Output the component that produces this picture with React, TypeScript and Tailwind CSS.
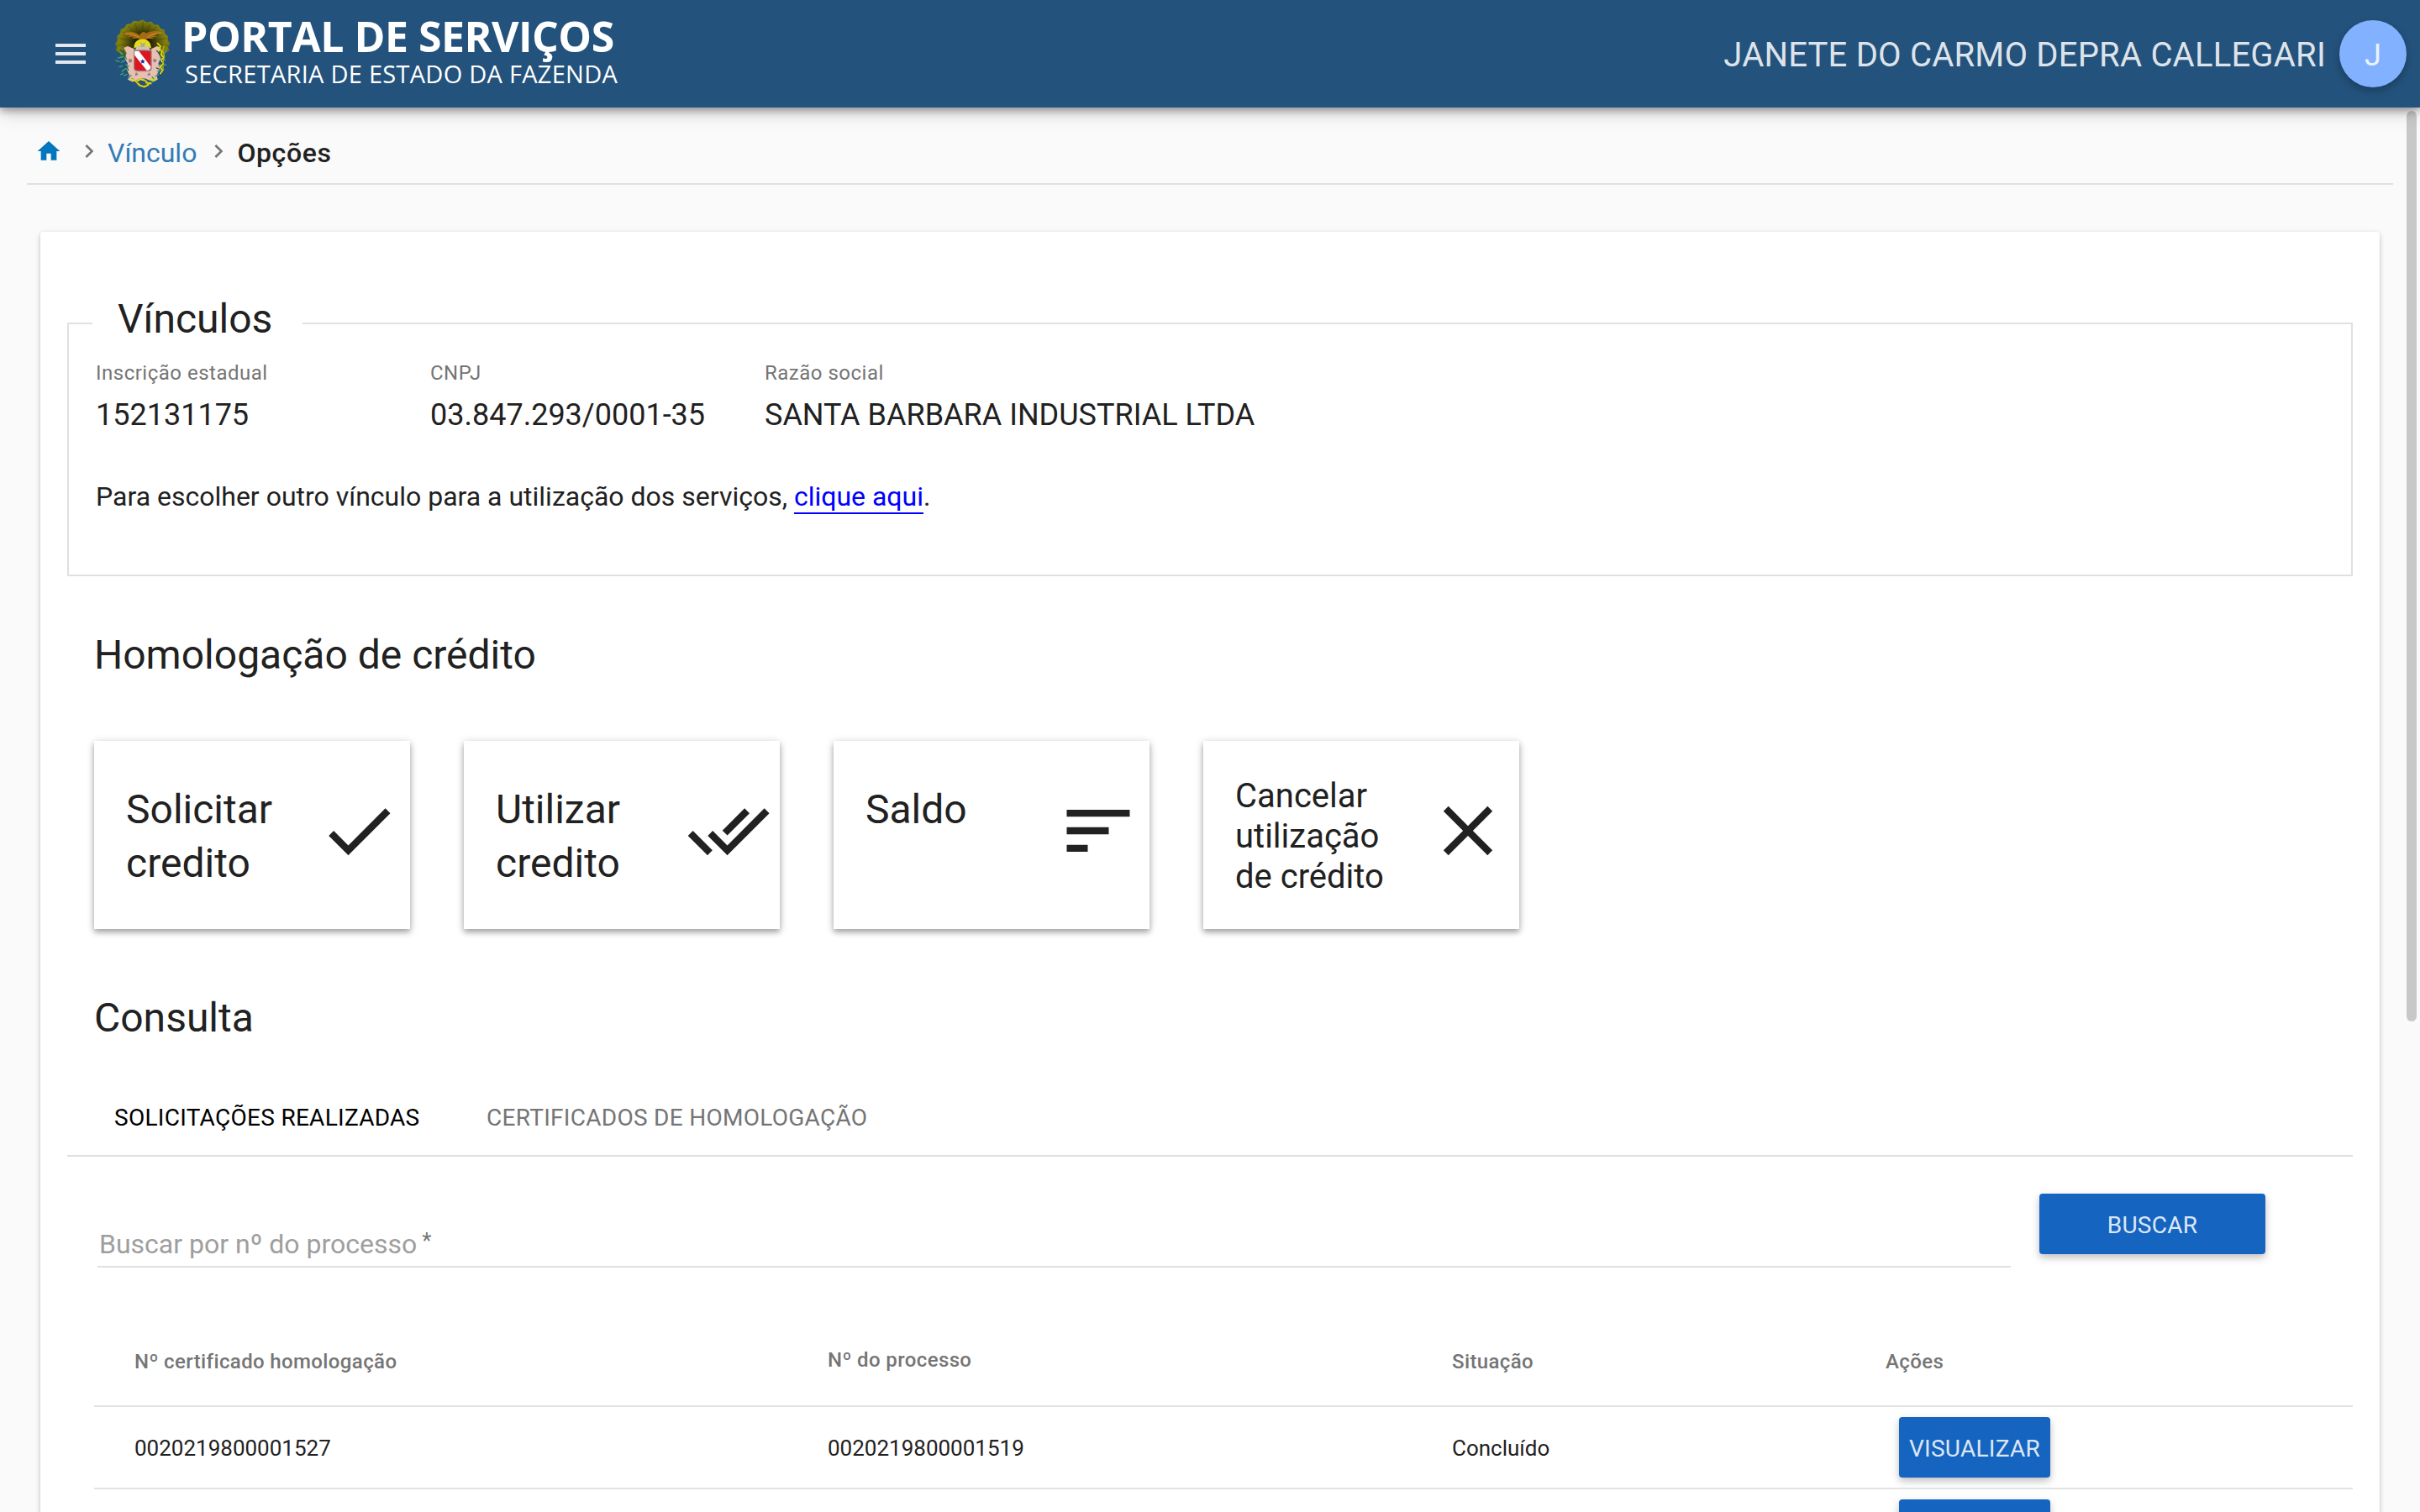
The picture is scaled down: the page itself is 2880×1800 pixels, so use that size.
import React from 'react';

const DARK = '#212121';

function Glyph({ d, className = '', fill = DARK }: { d: string; className?: string; fill?: string }) {
  return (
    <svg viewBox="0 0 24 24" className={`block shrink-0 ${className}`} fill={fill} aria-hidden="true">
      <path d={d} />
    </svg>
  );
}

const ICONS = {
  menu: 'M3 18h18v-2H3v2zm0-5h18v-2H3v2zm0-7v2h18V6H3z',
  home: 'M10 20v-6h4v6h5v-8h3L12 3 2 12h3v8z',
  chevron: 'M10 6L8.59 7.41 13.17 12l-4.58 4.59L10 18l6-6z',
  check: 'M9 16.17L4.83 12l-1.42 1.41L9 19 21 7l-1.41-1.41z',
  doneAll:
    'M18 7l-1.41-1.41-6.34 6.34 1.41 1.41L18 7zm4.24-1.41L11.66 16.17 7.48 12l-1.41 1.41L11.66 19l12-12-1.42-1.41zM.41 13.41L6 19l1.41-1.41L1.83 12 .41 13.41z',
  sort: 'M3 18h6v-2H3v2zM3 6v2h18V6H3zm0 7h12v-2H3v2z',
  close:
    'M19 6.41L17.59 5 12 10.59 6.41 5 5 6.41 10.59 12 5 17.59 6.41 19 12 13.41 17.59 19 19 17.59 13.41 12z',
};

/* State coat of arms */
function Crest() {
  return (
    <svg viewBox="45 35 205 255" className="mt-[22px] block h-[85px] w-[68px] shrink-0" aria-hidden="true">
      <defs>
        <radialGradient id="fan" cx="150" cy="125" r="105" gradientUnits="userSpaceOnUse">
          <stop offset="0.25" stopColor="#1d1c05" />
          <stop offset="0.55" stopColor="#5a580a" />
          <stop offset="0.8" stopColor="#85820f" />
          <stop offset="1" stopColor="#6c6b18" />
        </radialGradient>
      </defs>
      <path
        d="M150 39l14 9 17-2 10 10 16 2 6 12 15 5 1 13 12 10-1 14 8 13-7 12 4 13-14 8-8 16H72l-4-16-15-8 4-13-6-12 8-13-1-16 11-9 2-14 15-6 6-12 16-2 9-10 18 2z"
        fill="url(#fan)"
      />
      <path
        d="M150 120V44M150 120L122 52M150 120L98 62M150 120L78 82M150 120L66 106M150 120L58 132M150 120L178 52M150 120L202 62M150 120L222 82M150 120L234 106M150 120L242 132"
        stroke="#3a3908"
        strokeWidth="2"
        opacity="0.7"
      />
      <path
        d="M78 88c20-10 42-8 60 6l8-8c6-6 14-4 16 2 12-8 36-12 62-4-16 3-26 6-32 12l10 4-18 2 6 5-24 0-8 8-12 2-10-11-26 0 8-6-22 0 8-6-14-1z"
        fill="#a56a14"
      />
      <path d="M90 90c18-3 34 4 48 14M218 86c-20 0-38 6-52 17" stroke="#d39a2c" strokeWidth="3" fill="none" />
      <path d="M119 142c-2-22 11-34 30-34s32 12 31 34l-12-6h-38z" fill="#e6dc12" />
      <path d="M130 130c8 8 30 8 40 0l8 20h-56z" fill="#d2c0b2" />
      <path d="M141 118l9 7 10-7-4 16h-12z" fill="#aaa8a4" />
      <path
        d="M82 140l14-6 24 10v70h60v-70l22-10 14 6-8 14 6 24-8 18 6 20-12 22 4 16-18 8-26-12h-20l-26 12-18-8 6-16-10-22 4-20-10-18 6-20z"
        fill="#e8bfb0"
      />
      <path d="M100 178l12 4-2 10-10 0zM188 178l12 4-4 10-8-2zM126 226l8 10-12 4zM172 228l8 8-14 4z" fill="#8b7f7c" />
      <g fill="none" stroke="#3f9c80" strokeWidth="4.5" strokeLinecap="round">
        <path d="M68 154l14 8M62 176l16-4M54 186l14 4M72 192l16-8M66 208l14-4M76 224l14-10M84 240l14-8M98 250l10-12M86 168l6 12M112 250l8 6M90 200l10 6M70 236l10-4" />
        <path d="M226 160l8-8M216 178l14 6M208 200l12 8M204 224l12-6M196 242l10-6M190 252l-6-8M222 198l12 4M176 256l10 6" />
      </g>
      <g fill="none" stroke="#1e5944" strokeWidth="4" strokeLinecap="round">
        <path d="M70 148l18 16M66 164l14 4M80 150l6 22M60 196l12-6M78 202l8 8M90 226l8 8M94 208l4 12M200 150l12 12M206 156l8 14M220 214l6 8M200 212l8 4M210 234l6 4" />
      </g>
      <path
        d="M202 122l12 12-6 10 12 8-4 12 10 10-10 10 8 12-12 12 10 12-10 14"
        fill="none"
        stroke="#e8de0c"
        strokeWidth="5"
      />
      <path d="M227 130l-5 20 6 20-6 26 2 26" fill="none" stroke="#b9ac10" strokeWidth="4" />
      <path
        d="M106 252l18 6 14 16 18 6 14-8-8-14-20-6-14 8M174 252l18 4 8-6M160 264l22 4"
        fill="none"
        stroke="#e5d90e"
        strokeWidth="6"
      />
      <path d="M128 262l14 6M150 276l14-4M158 254l10 8" stroke="#82780e" strokeWidth="3" />
      <path
        d="M119 150l31-2 31 2v62c0 9-6 11-16 11h-30c-10 0-16-3-16-11z"
        fill="#dd1520"
        stroke="#8f8f92"
        strokeWidth="3.500"
      />
      <path d="M121 152h16l42 56c-1 9-5 12-14 13l-44-55z" fill="#fff" />
      <path d="M150 180l2.6 5.4 6 .6-4.4 4.200 1.200 6-5.400-3-5.400 3 1.200-6-4.400-4.200 6-.6z" fill="#16309a" />
    </svg>
  );
}

function AppBar() {
  return (
    <header className="relative z-10 flex h-32 items-start bg-[#23527c] pl-[60px] shadow-[0_4px_8px_rgba(0,0,0,0.26),0_4px_20px_rgba(0,0,0,0.26)]">
      <Glyph d={ICONS.menu} fill="rgba(255,255,255,0.87)" className="mt-10 h-12 w-12" />
      <div className="ml-[27px] flex">
        <Crest />
        <div className="ml-[13px] pt-[19px] font-['Open_Sans',sans-serif] text-white">
          <div className="h-12 text-[50px] leading-[48px] font-bold tracking-[-0.5px] whitespace-nowrap">PORTAL DE SERVIÇOS</div>
          <div className="mt-[3px] ml-1 text-[29px] leading-9 tracking-[0.27px] whitespace-nowrap">
            SECRETARIA DE ESTADO DA FAZENDA
          </div>
        </div>
      </div>
      <div className="ml-auto flex h-32 items-center pr-4">
        <span className="pt-1 text-[40px] leading-[48px] tracking-[0.2px] text-white/87">JANETE DO CARMO DEPRA CALLEGARI</span>
        <span className="ml-4 flex h-20 w-20 items-center justify-center rounded-full bg-[#82b1ff] pt-[3px] text-[36px] leading-10 text-white/87 shadow-[0_4px_10px_rgba(0,0,0,0.26)]">
          J
        </span>
      </div>
    </header>
  );
}

function Breadcrumb() {
  return (
    <nav className="mx-8 flex h-[92px] items-start border-b-2 border-[#e0e0e0] pl-[10px]">
      <Glyph d={ICONS.home} fill="#0277bd" className="mt-9 h-8 w-8" />
      <Glyph d={ICONS.chevron} fill="#757575" className="mt-9 ml-[16px] h-8 w-8" />
      <a className="mt-[34px] ml-[6px] text-[32px] leading-10 text-[#337ab7]">Vínculo</a>
      <Glyph d={ICONS.chevron} fill="#757575" className="mt-9 ml-[10px] h-8 w-8" />
      <span className="mt-[34px] ml-[6px] text-[32px] leading-10 font-medium tracking-[0.6px]">Opções</span>
    </nav>
  );
}

function Info({ label, value, className }: { label: string; value: string; className: string }) {
  return (
    <div className={className}>
      <div className="text-[24px] leading-8 tracking-[0.5px] text-[#757575]">{label}</div>
      <div className="mt-3 text-[36px] leading-[44px]">{value}</div>
    </div>
  );
}

function ServiceCard({ title, icon, small }: { title: string; icon: string; small?: boolean }) {
  return (
    <button className="flex h-[224px] w-[376px] items-start bg-white pl-[38px] text-left shadow-[0_2px_10px_rgba(0,0,0,0.2),0_4px_6px_rgba(0,0,0,0.24)]">
      <span
        className={
          small
            ? 'mt-[42px] block w-[227px] text-[40px] leading-[48px] whitespace-pre-line'
            : 'mt-[50px] block w-[227px] text-[48px] leading-[64px] whitespace-pre-line'
        }
      >
        {title}
      </span>
      <Glyph d={icon} className="mt-[57px] h-[100px] w-[100px]" />
    </button>
  );
}

function RaisedButton({ children, className }: { children: React.ReactNode; className: string }) {
  return (
    <button
      className={`flex h-[72px] shrink-0 items-center justify-center rounded-[4px] bg-[#1565c0] pt-[3px] text-[28px] leading-8 tracking-[0.28px] text-white/87 shadow-[0_4px_10px_rgba(0,0,0,0.26)] ${className}`}
    >
      {children}
    </button>
  );
}

const GRID = 'grid grid-cols-[825px_743px_516px_1fr] items-start pl-12 border-b-2 border-[#e3e3e3]';

const ROWS = [
  { certificate: '0020219800001527', process: '0020219800001519', status: 'Concluído', action: 'VISUALIZAR' },
  { certificate: '', process: '', status: '', action: '' },
];

export default function App() {
  return (
    <div className="h-[1800px] w-[2880px] overflow-hidden bg-[#fafafa] font-['Roboto',sans-serif] text-[#212121]">
      <AppBar />
      <div className="relative h-[1672px]">
        <Breadcrumb />
        <main className="mx-12 mt-14 h-[1700px] rounded-[4px] bg-white px-8 pt-[72px] shadow-[0_2px_6px_rgba(0,0,0,0.2),0_2px_2px_rgba(0,0,0,0.14),0_4px_2px_-2px_rgba(0,0,0,0.12)]">
          <fieldset className="h-[338px] border-2 border-[#e0e0e0]">
            <legend className="ml-7 h-[74px] w-[250px] pl-[30px] text-[48px] leading-[64px]">Vínculos</legend>
            <div className="flex pt-1.5 pl-8">
              <Info label="Inscrição estadual" value="152131175" className="w-[398px]" />
              <Info label="CNPJ" value="03.847.293/0001-35" className="w-[398px]" />
              <Info label="Razão social" value="SANTA BARBARA INDUSTRIAL LTDA" className="w-[700px]" />
            </div>
            <p className="mt-[55px] pl-8 text-[32px] leading-10">
              Para escolher outro vínculo para a utilização dos serviços,{' '}
              <a className="border-b-2 border-[#0000ff] text-[#0000ff]">clique aqui</a>.
            </p>
          </fieldset>

          <h2 className="mt-[62px] pl-8 text-[48px] leading-[64px]">Homologação de crédito</h2>
          <div className="mt-[70px] flex gap-16 pl-8">
            <ServiceCard title={'Solicitar\ncredito'} icon={ICONS.check} />
            <ServiceCard title={'Utilizar\ncredito'} icon={ICONS.doneAll} />
            <ServiceCard title="Saldo" icon={ICONS.sort} />
            <ServiceCard title={'Cancelar\nutilização\nde crédito'} icon={ICONS.close} small />
          </div>

          <h2 className="mt-[74px] pl-8 text-[48px] leading-[64px]">Consulta</h2>
          <div className="flex h-[133px] border-b-2 border-[#e0e0e0] pt-[71px] pl-14 text-[28px] leading-8 tracking-[0.28px]">
            <span className="w-[443px] text-black">SOLICITAÇÕES REALIZADAS</span>
            <span className="text-[#757575]">CERTIFICADOS DE HOMOLOGAÇÃO</span>
          </div>

          <div className="flex pl-9">
            <div className="flex h-[132px] w-[2277px] items-start border-b-2 border-[#e0e0e0] pt-[84px] pl-0.5 text-[32px] leading-10 text-[#9e9e9e]">
              Buscar por nº do processo
              <span className="ml-[6px] text-[26px] leading-8 text-[#757575]">*</span>
            </div>
            <RaisedButton className="mt-11 ml-[34px] w-[269px]">BUSCAR</RaisedButton>
          </div>

          <div className="pl-8">
            <div className={`${GRID} h-[166px] pt-24 text-[24px] leading-8 font-medium tracking-[0.38px] text-[#757575]`}>
              <span>Nº certificado homologação</span>
              <span className="-mt-0.5">Nº do processo</span>
              <span>Situação</span>
              <span>Ações</span>
            </div>
            {ROWS.map((row, i) => (
              <div key={i} className={`${GRID} h-[98px] text-[26px] leading-[98px]`}>
                <span>{row.certificate}</span>
                <span>{row.process}</span>
                <span>{row.status}</span>
                <RaisedButton className="mt-3 ml-[16px] w-[180px]">{row.action}</RaisedButton>
              </div>
            ))}
          </div>
        </main>
        <div className="absolute top-1 right-1 h-[1084px] w-3 rounded-full bg-[#c8c8c8]" />
      </div>
    </div>
  );
}
